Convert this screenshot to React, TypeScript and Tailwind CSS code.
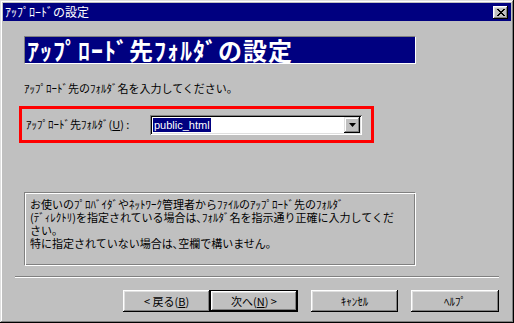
import React from 'react'

const jp = { fontFamily: '"Noto Sans CJK JP", "Liberation Sans", sans-serif' }

function Btn({ children, isDefault = false, w }: { children: React.ReactNode; isDefault?: boolean; w: string }) {
  return (
    <button
      className={
        'h-[22px] flex items-center justify-center bg-[#c0c0c0] text-[11px] leading-none text-black ' +
        w +
        (isDefault
          ? ' border border-black shadow-[inset_-1px_-1px_#000,inset_1px_1px_#fff,inset_-2px_-2px_#808080,inset_2px_2px_#dfdfdf]'
          : ' shadow-[inset_-1px_-1px_#000,inset_1px_1px_#fff,inset_-2px_-2px_#808080,inset_2px_2px_#dfdfdf]')
      }
      style={jp}
    >
      {children}
    </button>
  )
}

export default function App() {
  return (
    <div
      className="w-[514px] h-[323px] bg-[#c0c0c0] p-[3px] flex flex-col shadow-[inset_-1px_-1px_#000,inset_1px_1px_#dfdfdf,inset_-2px_-2px_#808080,inset_2px_2px_#fff] overflow-hidden"
      style={jp}
    >
      {/* title bar */}
      <div className="h-[18px] bg-[#000080] flex items-center justify-between pl-[2px] pr-[3px]">
        <span className="text-white text-[12px] leading-none">ｱｯﾌﾟﾛｰﾄﾞの設定</span>
        <div className="w-[15px] h-[13px] bg-[#c0c0c0] flex items-center justify-center shadow-[inset_-1px_-1px_#000,inset_1px_1px_#fff,inset_-2px_-2px_#808080,inset_2px_2px_#dfdfdf]">
          <svg width="8" height="7" viewBox="0 0 8 7">
            <path d="M0 0h2v1h1v1h2v-1h1v-1h2v1h-1v1h-1v1h-1v1h1v1h1v1h1v1h-2v-1h-1v-1h-2v1h-1v1h-2v-1h1v-1h1v-1h1v-1h-1v-1h-1v-1h-1z" fill="#000" />
          </svg>
        </div>
      </div>

      {/* body */}
      <div className="flex flex-col pl-[21px] pt-[15px]">
        <div className="w-[392px] h-[28px] bg-[#000080] border-t border-l border-t-[#808080] border-l-[#808080] border-b border-r border-b-white border-r-white flex items-center pl-[2px]">
          <span className="text-white text-[24px] font-bold leading-none tracking-[1px]">ｱｯﾌﾟﾛｰﾄﾞ先ﾌｫﾙﾀﾞの設定</span>
        </div>

        <p className="mt-[18px] h-[12px] text-[11px] leading-[12px] text-black whitespace-nowrap">
          ｱｯﾌﾟﾛｰﾄﾞ先のﾌｫﾙﾀﾞ名を入力してください。
        </p>

        <div className="mt-[12px] ml-[-5px] w-[355px] h-[37px] border-[3px] border-[#ff0000] flex items-center pl-[4px]">
          <span className="w-[124px] text-[11px] leading-none text-black whitespace-nowrap">
            ｱｯﾌﾟﾛｰﾄﾞ先ﾌｫﾙﾀﾞ(<span className="underline">U</span>) :
          </span>
          <div className="w-[212px] h-[20px] bg-white flex items-center justify-between pl-[3px] pr-[2px] shadow-[inset_1px_1px_#808080,inset_-1px_-1px_#fff,inset_2px_2px_#000,inset_-2px_-2px_#dfdfdf]">
            <span
              className="bg-[#000080] text-white text-[11px] leading-[14px] px-[1px]"
              style={{ fontFamily: '"Liberation Sans", Arial, sans-serif' }}
            >
              public_html
            </span>
            <div className="w-[16px] h-[16px] bg-[#c0c0c0] flex items-center justify-center shadow-[inset_-1px_-1px_#000,inset_1px_1px_#dfdfdf,inset_-2px_-2px_#808080,inset_2px_2px_#fff]">
              <svg width="7" height="4" viewBox="0 0 7 4">
                <path d="M0 0h7l-3.5 4z" fill="#000" />
              </svg>
            </div>
          </div>
        </div>

        <div className="mt-[49px] w-[392px] h-[74px] border-t border-l border-t-[#808080] border-l-[#808080] border-b border-r border-b-white border-r-white shadow-[inset_1px_1px_#fff,inset_-1px_-1px_#808080] pl-[5px] pt-[5px]">
          <p className="text-[11px] leading-[13px] text-black whitespace-nowrap">
            お使いのﾌﾟﾛﾊﾞｲﾀﾞやﾈｯﾄﾜｰｸ管理者からﾌｧｲﾙのｱｯﾌﾟﾛｰﾄﾞ先のﾌｫﾙﾀﾞ
            <br />
            (ﾃﾞｨﾚｸﾄﾘ)を指定されている場合は､ﾌｫﾙﾀﾞ名を指示通り正確に入力してくだ
            <br />
            さい｡
            <br />
            特に指定されていない場合は､空欄で構いません｡
          </p>
        </div>

        <div className="mt-[10px] ml-[-9px] w-[484px] h-[2px] border-t border-t-[#808080] border-b border-b-white" />

        <div className="mt-[12px] flex pl-[99px]">
          <Btn w="w-[87px]">
            &lt; 戻る(<span className="underline">B</span>)
          </Btn>
          <Btn w="w-[88px]" isDefault>
            次へ(<span className="underline">N</span>) &gt;
          </Btn>
          <div className="w-[13px]" />
          <Btn w="w-[87px]">ｷｬﾝｾﾙ</Btn>
          <div className="w-[13px]" />
          <Btn w="w-[88px]">ﾍﾙﾌﾟ</Btn>
        </div>
      </div>
    </div>
  )
}
